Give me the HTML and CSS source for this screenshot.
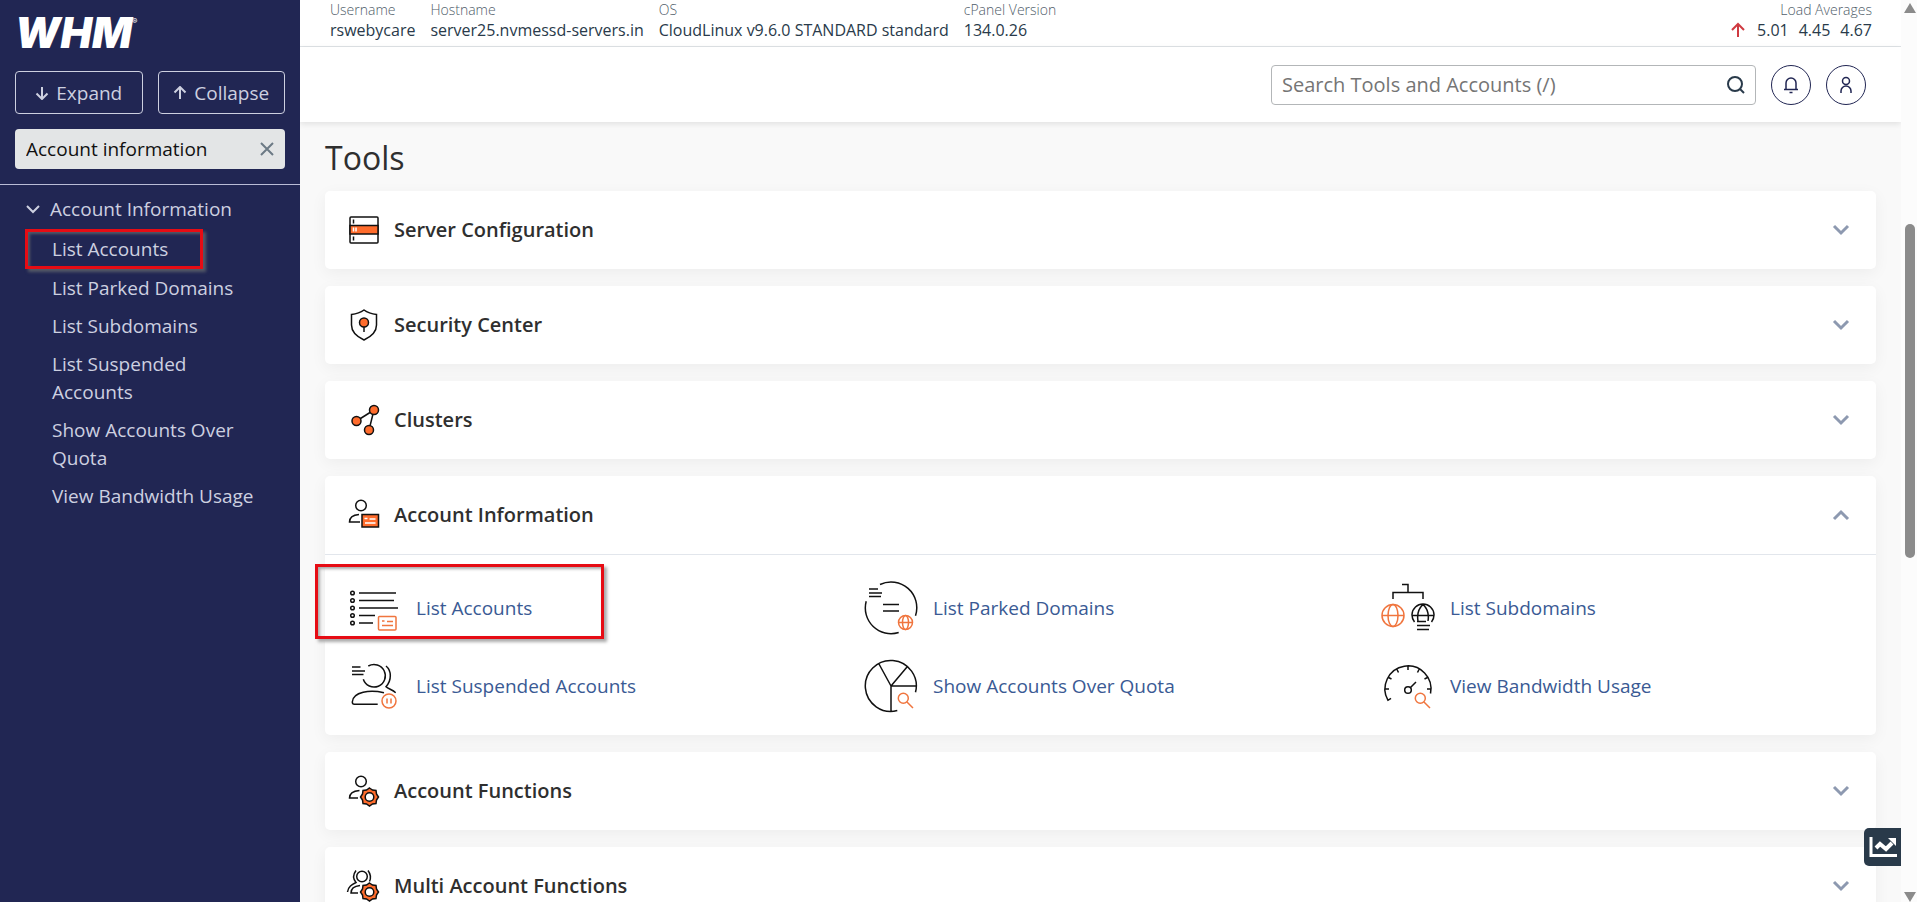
FILE: index.html
```html
<!DOCTYPE html>
<html lang="en">
<head>
  <meta charset="UTF-8">
  <meta name="viewport" content="width=device-width, initial-scale=1.0">
  <title>WHM - Tools</title>
  <link rel="stylesheet" href="styles.css">
</head>
<body>
  <aside class="sidebar">
    <div class="sidebar-top">
      <a class="logo" href="#">WHM<sup>®</sup></a>
      <div class="nav-buttons">
        <button type="button">
          <svg width="14" height="14" viewBox="0 0 14 14"><path d="M7 1v12M1.500 7.500L7 13l5.500-5.500"/></svg>
          Expand
        </button>
        <button type="button">
          <svg width="14" height="14" viewBox="0 0 14 14"><path d="M7 13V1M1.500 6.500L7 1l5.500 5.500"/></svg>
          Collapse
        </button>
      </div>
      <div class="nav-search">
        <input type="text" value="Account information" aria-label="Search tools">
        <button type="button" aria-label="Clear search">
          <svg width="14" height="14" viewBox="0 0 14 14"><path d="M1 1l12 12M13 1L1 13"/></svg>
        </button>
      </div>
    </div>
    <nav class="nav">
      <a class="nav-group" href="#">
        <svg width="14" height="10" viewBox="0 0 14 10"><path d="M1 2l6 6 6-6"/></svg>
        Account Information
      </a>
      <ul>
        <li class="marked"><a href="#">List Accounts</a></li>
        <li><a href="#">List Parked Domains</a></li>
        <li><a href="#">List Subdomains</a></li>
        <li><a href="#">List Suspended Accounts</a></li>
        <li><a href="#">Show Accounts Over Quota</a></li>
        <li><a href="#">View Bandwidth Usage</a></li>
      </ul>
    </nav>
  </aside>

  <div class="page">
    <div class="info-bar">
      <dl><dt>Username</dt><dd>rswebycare</dd></dl>
      <dl><dt>Hostname</dt><dd>server25.nvmessd-servers.in</dd></dl>
      <dl><dt>OS</dt><dd>CloudLinux v9.6.0 STANDARD standard</dd></dl>
      <dl><dt>cPanel Version</dt><dd>134.0.26</dd></dl>
      <dl class="load">
        <dt>Load Averages</dt>
        <dd>
          <svg width="14" height="16" viewBox="0 0 14 16"><path d="M7 15V2M1 8l6-6 6 6"/></svg>
          <span>5.01</span><span>4.45</span><span>4.67</span>
        </dd>
      </dl>
    </div>

    <header class="header">
      <div class="search">
        <input type="search" placeholder="Search Tools and Accounts (/)" aria-label="Search Tools and Accounts">
        <button type="button" aria-label="Search">
          <svg width="18" height="18" viewBox="0 0 18 18"><circle cx="8" cy="8" r="7"/><path d="M13 13l4 4"/></svg>
        </button>
      </div>
      <button class="round" type="button" aria-label="Notifications">
        <svg width="18" height="18" viewBox="0 0 18 18"><path d="M2 13.500h14M4 13.500V7a5 5 0 0 1 10 0v6.500M7.500 16.500h3"/></svg>
      </button>
      <button class="round" type="button" aria-label="User menu">
        <svg width="18" height="18" viewBox="0 0 18 18"><circle cx="9" cy="5" r="3.500"/><path d="M4 17v-2a5 5 0 0 1 10 0v2"/></svg>
      </button>
    </header>

    <main class="content">
      <h1>Tools</h1>

      <section class="card">
        <h2><button type="button">
          <svg class="icon" viewBox="0 0 36 36"><rect x="5" y="5" width="28" height="26" rx="1"/><path class="fill" d="M5 13.500h28v8.500H5z"/><path d="M8.500 7.500v4M8.500 24.500v4"/><path class="white" d="M8.500 15.500v4M11 15.500v4"/></svg>
          Server Configuration
          <svg class="chevron" viewBox="0 0 18 12"><path d="M2 2l7 7 7-7"/></svg>
        </button></h2>
      </section>

      <section class="card">
        <h2><button type="button">
          <svg class="icon" viewBox="0 0 36 36"><path d="M19 3c4 3 8 4 12.500 4.500V18c0 7-5 11.500-12.500 15C11.500 29.500 6.500 25 6.500 18V7.500C11 7 15 6 19 3z"/><path d="M19 20v5"/><circle class="fill" cx="19" cy="15.500" r="4.500"/></svg>
          Security Center
          <svg class="chevron" viewBox="0 0 18 12"><path d="M2 2l7 7 7-7"/></svg>
        </button></h2>
      </section>

      <section class="card">
        <h2><button type="button">
          <svg class="icon" viewBox="0 0 36 36"><path d="M11.500 19L29 8l-5 20"/><circle class="fill" cx="29" cy="8" r="4.500"/><circle class="fill" cx="11.500" cy="19" r="4.500"/><circle class="fill" cx="24" cy="28" r="4.500"/></svg>
          Clusters
          <svg class="chevron" viewBox="0 0 18 12"><path d="M2 2l7 7 7-7"/></svg>
        </button></h2>
      </section>

      <section class="card">
        <h2><button type="button" aria-expanded="true">
          <svg class="icon" viewBox="0 0 36 36"><circle cx="16" cy="8.500" r="5.300"/><path d="M14 17.500c-6 .5-9.500 3-9.500 7.500H15"/><path class="fill" d="M17 17.500h16.500V30H17z"/><path class="white" d="M19.500 21.500h3M24.500 22h6M20 26h10.500"/></svg>
          Account Information
          <svg class="chevron" viewBox="0 0 18 12"><path d="M2 10l7-7 7 7"/></svg>
        </button></h2>
        <div class="tools">
          <a class="marked" href="#">
            <svg class="tool-icon" viewBox="0 0 56 56"><g><circle cx="7.500" cy="13" r="1.800"/><circle cx="7.500" cy="20.500" r="1.800"/><circle cx="7.500" cy="28" r="1.800"/><circle cx="7.500" cy="35.500" r="1.800"/><circle cx="7.500" cy="43" r="1.800"/></g><path d="M14 13h37M14 20.500h35M14 28h39M14 35.500h16M14 43h14"/><g class="orange"><rect x="33.500" y="36.500" width="17.500" height="13.500" rx="1"/><path d="M37 41h2.500M42 41.500h6M37 45.500h11"/></g></svg>
            List Accounts
          </a>
          <a href="#">
            <svg class="tool-icon" viewBox="0 0 56 56"><path d="M18 4.500A25.700 25.700 0 0 1 53.500 35.700M36.700 52.500A25.700 25.700 0 0 1 4.200 21.300M7 9h9M7 13h13M7 16.500h12M21 24.500h16M21 31h16"/><g class="orange"><circle cx="43.500" cy="42.500" r="7"/><ellipse cx="43.500" cy="42.500" rx="3" ry="7"/><path d="M36.500 42.500h14"/></g></svg>
            List Parked Domains
          </a>
          <a href="#">
            <svg class="tool-icon" viewBox="0 0 56 56"><path d="M23 4.500h6v8M14 19v-6.500h30V19"/><path d="M35.500 42a11 11 0 1 1 17 0M33 35.500h22M39 41c-1-6 0-12 5-16.500 5 4.500 6 10.500 5 16.500M38 41.500h9M38 45.500h13M38 49.500h12"/><g class="orange"><circle cx="14" cy="35.500" r="11"/><ellipse cx="14" cy="35.500" rx="5" ry="11"/><path d="M3 35.500h22"/></g></svg>
            List Subdomains
          </a>
          <a href="#">
            <svg class="tool-icon" viewBox="0 0 56 56"><path d="M23.300 8a11.300 11.300 0 1 1-5 13.300M7 9h8.500M7 13h13M7 16.500h11.500M41 8c5.500 4.500 6 14 0 20.700 2.500 2.300 6.500 3 9.700 6M39 34.700c-14-3-31-1.200-31.700 9.300 0 1.500.7 2.300 2 2.300h23.400"/><g class="orange"><circle cx="44" cy="43" r="7"/><path d="M42 40.500v5M46 40.500v5"/></g></svg>
            List Suspended Accounts
          </a>
          <a href="#">
            <svg class="tool-icon" viewBox="0 0 56 56"><path d="M53.500 34.300A25.500 25.500 0 1 0 35.300 52.600M29 28L17 6M29 28L45 9M54 28H29v25"/><g class="orange"><circle cx="41.300" cy="40.300" r="5"/><path d="M45 44l6 6"/></g></svg>
            Show Accounts Over Quota
          </a>
          <a href="#">
            <svg class="tool-icon" viewBox="0 0 56 56"><path d="M51.500 35.500A23 23 0 1 0 9 42.300l3-2M6.500 31H10M48 31h3.500M29 8.500V12M18 11.500l1.500 3M40 11.500l-1.500 3M9.500 19.500l3 1.500M48.500 19.500l-3 1.500M31.500 29.500L37 24"/><circle cx="29" cy="32" r="3.300"/><g class="orange"><circle cx="41.300" cy="40.300" r="5"/><path d="M45 44l6 6"/></g></svg>
            View Bandwidth Usage
          </a>
        </div>
      </section>

      <section class="card">
        <h2><button type="button">
          <svg class="icon" viewBox="0 0 36 36"><circle cx="16" cy="8.500" r="5.300"/><path d="M14.500 17.500c-6 .5-10 3-10 7.500H13"/><path class="fill" d="M24.500 15l3 2 3.500.500.500 3.500 2 3-2 3-.5 3.500-3.500.5-3 2-3-2-3.500-.5-.5-3.500-2-3 2-3 .5-3.500 3.500-.5z"/><circle class="hole" cx="24.500" cy="24" r="4.300"/></svg>
          Account Functions
          <svg class="chevron" viewBox="0 0 18 12"><path d="M2 2l7 7 7-7"/></svg>
        </button></h2>
      </section>

      <section class="card">
        <h2><button type="button">
          <svg class="icon" viewBox="0 0 36 36"><circle cx="17" cy="8.500" r="5.300"/><path d="M11 2.500c-3 4-3 8.500 0 12-4 2-8 4-8.500 9.500M23 2.500c3 4 3 7.500 1.500 11M15 17.500c-5 .5-9 3-9 7.500h7"/><path class="fill" d="M24.500 15l3 2 3.500.500.500 3.500 2 3-2 3-.5 3.500-3.500.5-3 2-3-2-3.500-.5-.5-3.500-2-3 2-3 .5-3.500 3.500-.5z"/><circle class="hole" cx="24.500" cy="24" r="4.300"/></svg>
          Multi Account Functions
          <svg class="chevron" viewBox="0 0 18 12"><path d="M2 2l7 7 7-7"/></svg>
        </button></h2>
      </section>
    </main>

    <button class="stats" type="button" aria-label="Statistics">
      <svg width="30" height="24" viewBox="0 0 30 24"><path d="M3 2v18.500h26" stroke-width="3"/><path d="M8 13l4-4 6 5 6-6" stroke-width="4"/><path d="M20 3h8v8z" fill="#fff" stroke="none"/></svg>
    </button>
  </div>

  <div class="scrollbar" aria-hidden="true">
    <svg width="12" height="10" viewBox="0 0 12 10"><path d="M6 0l6 10H0z"/></svg>
    <div class="thumb"></div>
    <svg width="12" height="10" viewBox="0 0 12 10"><path d="M0 0h12L6 10z"/></svg>
  </div>
</body>
</html>
```
FILE: styles.css
```css
* {
  box-sizing: border-box;
}
body {
  font-family: "Open Sans", "Noto Sans", sans-serif;
  font-size: 19px;
  line-height: 28px;
  display: grid;
  grid-template-columns: 300px 1fr 16px;
  height: 100vh;
  margin: 0;
  overflow: hidden;
  color: #2f2f2f;
  background-color: #f9f9f9;
}
button, input {
  font: inherit;
  color: inherit;
}
button {
  padding: 0;
  border: none;
  background: none;
  cursor: pointer;
}
a {
  text-decoration: none;
}
svg {
  flex: none;
  fill: none;
  stroke: currentColor;
  stroke-width: 2;
}

/* sidebar */
.sidebar {
  color: #cdd0e0;
  background-color: #212653;
}
.sidebar-top {
  display: flex;
  flex-direction: column;
  gap: 15px;
  padding: 11px 15px 15px;
  border-bottom: 1px solid #b9bcd6;
}
.logo {
  display: flex;
  height: 45px;
  color: #fff;
  font-family: Inter, sans-serif;
  font-size: 42px;
  font-style: italic;
  font-weight: 900;
  line-height: 43px;
}
.logo sup {
  font-size: 8px;
  font-style: normal;
  font-weight: 400;
  line-height: 20px;
}
.nav-buttons {
  display: grid;
  grid-template-columns: 1fr 1fr;
  gap: 15px;
}
.nav-buttons button {
  display: flex;
  align-items: center;
  justify-content: center;
  gap: 7px;
  height: 43px;
  border: 1px solid #cdd0e0;
  border-radius: 4px;
}
.nav-search {
  display: flex;
  align-items: center;
  height: 40px;
  padding: 0 11px;
  color: #111;
  background-color: #e3e5e6;
  border-radius: 4px;
}
.nav-search input {
  flex: 1;
  min-width: 0;
  padding: 0;
  border: none;
  background: none;
}
.nav-search button {
  display: flex;
  color: #6c7a85;
}
.nav-group {
  display: flex;
  align-items: center;
  gap: 10px;
  padding: 10px 26px 6px;
  color: inherit;
}
.nav ul {
  margin: 0;
  padding: 0 25px;
  list-style: none;
}
.nav li {
  padding: 5px 10px 5px 27px;
}
.nav li a {
  color: inherit;
}
.nav li.marked {
  width: 178px;
  outline: 3px solid #e60c14;
  outline-offset: -3px;
  padding: 6px 27px;
  box-shadow: 3px 3px 3px #555a68, inset 5px 5px 3px #555a68;
  white-space: nowrap;
}

/* top bars */
.page {
  position: relative;
  display: flex;
  flex-direction: column;
  min-width: 0;
  overflow: hidden;
}
.info-bar {
  display: flex;
  flex: none;
  gap: 15px;
  padding: 0 29px 5px 30px;
  background-color: #fff;
  border-bottom: 1px solid #dfe3e6;
}
.info-bar dl {
  margin: 0;
}
.info-bar dt {
  font-size: 14px;
  font-weight: 300;
  line-height: 19px;
  color: #4f5d69;
}
.info-bar dd {
  margin: 0;
  font-size: 16px;
  line-height: 22px;
  color: #293a4a;
}
.info-bar .load {
  margin-left: auto;
  text-align: right;
}
.load dd {
  display: flex;
  align-items: center;
  gap: 10px;
}
.load svg {
  margin-right: 2px;
  color: #cf3a41;
}
.header {
  z-index: 1;
  display: flex;
  flex: none;
  align-items: center;
  justify-content: flex-end;
  gap: 15px;
  height: 75px;
  padding: 0 35px;
  background-color: #fff;
  box-shadow: 0 2px 6px rgba(0, 0, 0, 0.1);
}
.search {
  display: flex;
  align-items: center;
  width: 485px;
  height: 40px;
  padding: 0 10px;
  border: 1px solid #b3b6b8;
  border-radius: 4px;
}
.search input {
  flex: 1;
  min-width: 0;
  padding: 0;
  border: none;
  outline: none;
  font-size: 20px;
}
.search input::placeholder {
  color: #757575;
}
.search button {
  display: flex;
  color: #293a4a;
}
.round {
  display: flex;
  align-items: center;
  justify-content: center;
  width: 40px;
  height: 40px;
  color: #212653;
  border: 1px solid #212653;
  border-radius: 50%;
}
.round svg {
  stroke-width: 1.5;
}

/* tools */
.content {
  padding: 14px 25px;
}
h1 {
  margin: 0 0 11px;
  font-size: 32px;
  font-weight: 400;
  line-height: 44px;
}
.card {
  margin-bottom: 17px;
  background-color: #fff;
  border-radius: 5px;
  box-shadow: 0 4px 16px rgba(0, 0, 0, 0.05);
}
.card h2 {
  margin: 0;
  font-size: 20px;
  font-weight: 600;
}
.card h2 button {
  display: flex;
  align-items: center;
  gap: 13px;
  width: 100%;
  height: 78px;
  padding: 0 26px 0 20px;
  text-align: left;
}
.icon {
  width: 36px;
  height: 36px;
  color: #111;
  stroke-width: 1.5;
}
.icon .fill {
  fill: #ff6c2c;
}
.icon .hole {
  fill: #fff;
}
.icon .white {
  stroke: #fff;
}
.chevron {
  width: 18px;
  height: 12px;
  margin-left: auto;
  color: #8d99b0;
  stroke-width: 3;
}
.tools {
  display: grid;
  grid-template-columns: repeat(3, 1fr);
  padding: 14px 0 10px;
  border-top: 1px solid #e2e6ec;
}
.tools a {
  position: relative;
  display: flex;
  align-items: center;
  gap: 15px;
  height: 78px;
  padding-left: 20px;
  color: #3a5a94;
}
.tools .marked::after {
  content: "";
  position: absolute;
  top: -5px;
  left: -10px;
  box-sizing: border-box;
  width: 289px;
  height: 75px;
  border: 3px solid #e60c14;
  box-shadow: 3px 3px 3px #aaa, inset 2px 2px 3px #aaa;
}
.tool-icon {
  width: 56px;
  height: 56px;
  color: #111;
  stroke-width: 1.5;
}
.orange {
  stroke: #f0753e;
}
.stats {
  position: absolute;
  right: 0;
  bottom: 36px;
  display: flex;
  align-items: center;
  justify-content: center;
  width: 37px;
  height: 38px;
  color: #fff;
  background-color: #293a4a;
  border-radius: 5px 0 0 5px;
}

/* page scrollbar */
.scrollbar {
  display: grid;
  grid-template-rows: 10px 1fr 10px;
  justify-items: center;
  padding-top: 3px;
  padding-left: 2px;
  background-color: #fcfcfc;
}
.scrollbar svg {
  fill: #8b8b8b;
  stroke: none;
}
.thumb {
  width: 10px;
  height: 38%;
  margin-top: 211px;
  background-color: #8b8b8b;
  border-radius: 5px;
}
```
